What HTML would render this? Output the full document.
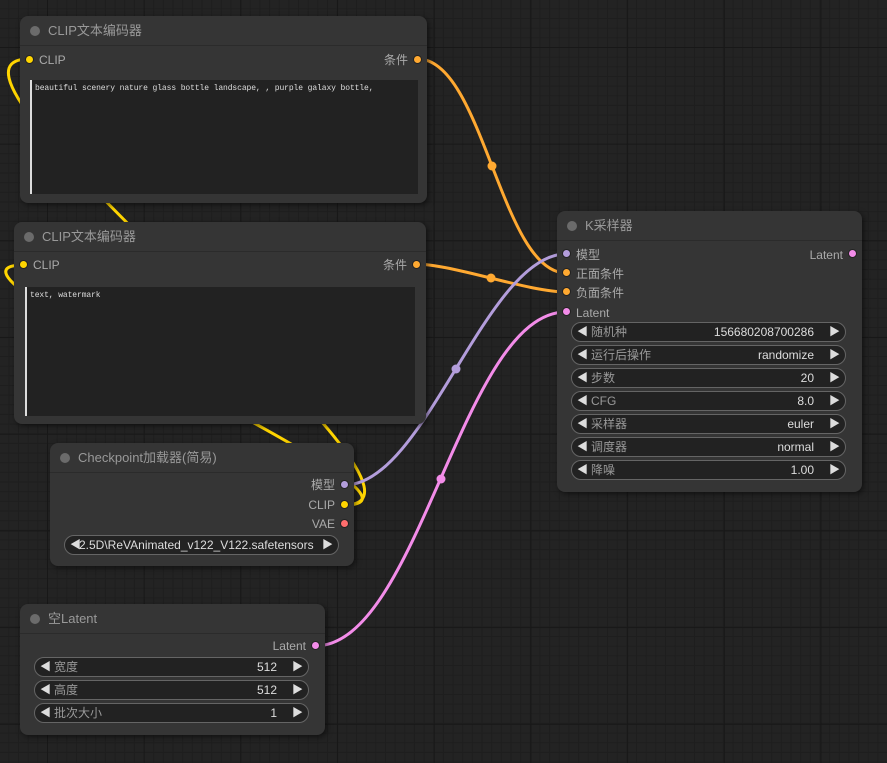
<!DOCTYPE html>
<html><head><meta charset="utf-8"><style>
*{box-sizing:border-box;margin:0;padding:0}
body{width:887px;height:763px;overflow:hidden;position:relative;background-color:#232323;
background-image:
linear-gradient(#181818 1px,transparent 1px),linear-gradient(90deg,#181818 1px,transparent 1px),
linear-gradient(#1e1e1e 1px,transparent 1px),linear-gradient(90deg,#1e1e1e 1px,transparent 1px);
background-size:96.7px 96.7px,96.7px 96.7px,9.67px 9.67px,9.67px 9.67px;
background-position:47px 47px,47px 47px,47px 47px,47px 47px;
font-family:"Liberation Sans","Noto Sans CJK SC",sans-serif;}
svg.links{position:absolute;left:0;top:0}
.node{position:absolute;background:#353535;border-radius:8px;box-shadow:2px 2px 6px rgba(0,0,0,.5)}
.title{height:30px;border-bottom:1px solid #2b2b2b;color:#999;font-size:13px;line-height:30px;padding-left:28px;position:relative}
.title:before{content:"";position:absolute;left:10px;top:10px;width:10px;height:10px;border-radius:50%;background:#6b6b6b}
.lbl{position:absolute;font-size:12px;color:#aaa;line-height:14px;white-space:nowrap}
.dot{position:absolute;width:9px;height:9px;border-radius:50%;border:1px solid #222}
.ta{position:absolute;background:#222;border-left:2px solid #ddd;font-family:"Liberation Mono",monospace;font-size:8px;letter-spacing:-0.1px;color:#ddd;padding:4px 3px;white-space:nowrap;overflow:hidden}
.w{position:absolute;height:20px;border:1px solid #656565;border-radius:10px;background:#222;font-size:12px;line-height:18px;color:#999}
.w .a{position:absolute;left:5px;color:#ddd;font-size:11px}
.w .b{position:absolute;right:5px;color:#ddd;font-size:11px}
.w .n{position:absolute;left:19px}
.w .v{position:absolute;right:31px;color:#ddd}
</style></head><body>
<svg class="links" width="887" height="763">
<g fill="none" stroke-width="3">
<path d="M344,505 C480,505 -107,59 29,59" stroke="#ffd500"/>
<path d="M344,505 C470,505 -102,265 24,265" stroke="#ffd500"/>
<path d="M418,59 C483,59 501,273 566,273" stroke="#ffa931"/>
<path d="M415,264 C453,264 528,292 566,292" stroke="#ffa931"/>
<path d="M345,485 C425,485 486,254 566,254" stroke="#b39ddb"/>
<path d="M315,646 C419,646 462,312 566,312" stroke="#f38ce9"/>
</g>
<circle cx="492" cy="166" r="4.5" fill="#ffa931"/>
<circle cx="491" cy="278" r="4.5" fill="#ffa931"/>
<circle cx="456" cy="369" r="4.5" fill="#b39ddb"/>
<circle cx="441" cy="479" r="4.5" fill="#f38ce9"/>
</svg>

<div class="node" style="left:20px;top:16px;width:407px;height:187px">
<div class="title">CLIP文本编码器</div>
<div class="dot" style="left:5px;top:39px;background:#ffd500"></div><div class="lbl" style="left:19px;top:37px">CLIP</div>
<div class="lbl" style="right:19px;top:37px">条件</div><div class="dot" style="right:5px;top:39px;background:#ffa931"></div>
<div class="ta" style="left:10px;top:64px;width:388px;height:114px">beautiful scenery nature glass bottle landscape, , purple galaxy bottle,</div>
</div>

<div class="node" style="left:14px;top:222px;width:412px;height:202px">
<div class="title">CLIP文本编码器</div>
<div class="dot" style="left:5px;top:38px;background:#ffd500"></div><div class="lbl" style="left:19px;top:36px">CLIP</div>
<div class="lbl" style="right:19px;top:36px">条件</div><div class="dot" style="right:5px;top:38px;background:#ffa931"></div>
<div class="ta" style="left:11px;top:65px;width:390px;height:129px">text, watermark</div>
</div>

<div class="node" style="left:50px;top:443px;width:304px;height:123px">
<div class="title">Checkpoint加载器(简易)</div>
<div class="lbl" style="right:19px;top:35px">模型</div><div class="dot" style="right:5px;top:37px;background:#b39ddb"></div>
<div class="lbl" style="right:19px;top:55px">CLIP</div><div class="dot" style="right:5px;top:57px;background:#ffd500"></div>
<div class="lbl" style="right:19px;top:74px">VAE</div><div class="dot" style="right:5px;top:76px;background:#ff6e6e"></div>
<div class="w" style="left:14px;top:92px;width:275px"><span class="a">◀</span><span class="n" style="left:14px;color:#ddd">2.5D\ReVAnimated_v122_V122.safetensors</span><span class="b">▶</span></div>
</div>

<div class="node" style="left:20px;top:604px;width:305px;height:131px">
<div class="title">空Latent</div>
<div class="lbl" style="right:19px;top:35px">Latent</div><div class="dot" style="right:5px;top:37px;background:#f38ce9"></div>
<div class="w" style="left:14px;top:53px;width:275px"><span class="a">◀</span><span class="n">宽度</span><span class="v">512</span><span class="b">▶</span></div>
<div class="w" style="left:14px;top:76px;width:275px"><span class="a">◀</span><span class="n">高度</span><span class="v">512</span><span class="b">▶</span></div>
<div class="w" style="left:14px;top:99px;width:275px"><span class="a">◀</span><span class="n">批次大小</span><span class="v">1</span><span class="b">▶</span></div>
</div>

<div class="node" style="left:557px;top:211px;width:305px;height:281px">
<div class="title">K采样器</div>
<div class="dot" style="left:5px;top:38px;background:#b39ddb"></div><div class="lbl" style="left:19px;top:37px">模型</div>
<div class="lbl" style="right:19px;top:37px">Latent</div><div class="dot" style="right:5px;top:38px;background:#f38ce9"></div>
<div class="dot" style="left:5px;top:57px;background:#ffa931"></div><div class="lbl" style="left:19px;top:56px">正面条件</div>
<div class="dot" style="left:5px;top:76px;background:#ffa931"></div><div class="lbl" style="left:19px;top:75px">负面条件</div>
<div class="dot" style="left:5px;top:96px;background:#f38ce9"></div><div class="lbl" style="left:19px;top:95px">Latent</div>
<div class="w" style="left:14px;top:111px;width:275px"><span class="a">◀</span><span class="n">随机种</span><span class="v">156680208700286</span><span class="b">▶</span></div>
<div class="w" style="left:14px;top:134px;width:275px"><span class="a">◀</span><span class="n">运行后操作</span><span class="v">randomize</span><span class="b">▶</span></div>
<div class="w" style="left:14px;top:157px;width:275px"><span class="a">◀</span><span class="n">步数</span><span class="v">20</span><span class="b">▶</span></div>
<div class="w" style="left:14px;top:180px;width:275px"><span class="a">◀</span><span class="n">CFG</span><span class="v">8.0</span><span class="b">▶</span></div>
<div class="w" style="left:14px;top:203px;width:275px"><span class="a">◀</span><span class="n">采样器</span><span class="v">euler</span><span class="b">▶</span></div>
<div class="w" style="left:14px;top:226px;width:275px"><span class="a">◀</span><span class="n">调度器</span><span class="v">normal</span><span class="b">▶</span></div>
<div class="w" style="left:14px;top:249px;width:275px"><span class="a">◀</span><span class="n">降噪</span><span class="v">1.00</span><span class="b">▶</span></div>
</div>
</body></html>
